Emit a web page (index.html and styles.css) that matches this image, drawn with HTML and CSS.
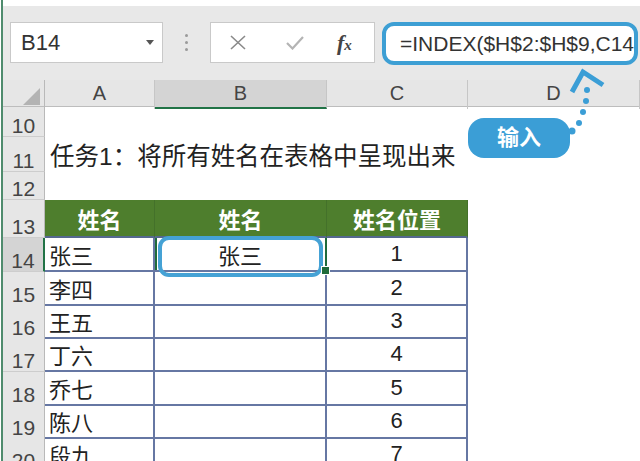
FILE: index.html
```html
<!DOCTYPE html>
<html lang="zh-CN">
<head>
    <meta charset="UTF-8">
    <title>INDEX 姓名</title>
    <link rel="stylesheet" href="styles.css">
</head>
<body>
    <div class="app">
        <div class="toolbar">
            <div class="namebox"><span>B14</span><span class="caret"></span></div>
            <div class="grip"><i></i><i></i><i></i></div>
            <div class="fxbox">
                <svg class="cancel" width="16" height="15" viewBox="0 0 16 15"><path d="M1 1 L15 14 M15 1 L1 14" stroke="#8a8a8a" stroke-width="1.6" fill="none"/></svg>
                <svg class="enter" width="18" height="15" viewBox="0 0 18 15"><path d="M1 8 L6.5 13.5 L17 2" stroke="#b4b4b4" stroke-width="2.2" fill="none"/></svg>
                <span class="fx">f<small>x</small></span>
            </div>
            <div class="formula">=INDEX($H$2:$H$9,C14</div>
        </div>

        <div class="sheet">
            <div class="row heads">
                <div class="corner"></div>
                <div class="ch">A</div>
                <div class="ch sel">B</div>
                <div class="ch">C</div>
                <div class="ch">D</div>
            </div>
            <div class="row r10">
                <div class="rh">10</div><div></div><div></div><div></div><div></div>
            </div>
            <div class="row r11">
                <div class="rh">11</div>
                <div class="title">任务1：将所有姓名在表格中呈现出来</div><div></div><div></div><div></div>
            </div>
            <div class="row r12">
                <div class="rh">12</div><div></div><div></div><div></div><div></div>
            </div>
            <div class="row r13">
                <div class="rh">13</div>
                <div class="th">姓名</div>
                <div class="th">姓名</div>
                <div class="th">姓名位置</div>
                <div></div>
            </div>
            <div class="row r14">
                <div class="rh sel">14</div>
                <div class="t name">张三</div>
                <div class="t mid active">张三</div>
                <div class="t mid">1</div>
                <div></div>
            </div>
            <div class="row">
                <div class="rh">15</div>
                <div class="t name">李四</div><div class="t"></div><div class="t mid">2</div><div></div>
            </div>
            <div class="row">
                <div class="rh">16</div>
                <div class="t name">王五</div><div class="t"></div><div class="t mid">3</div><div></div>
            </div>
            <div class="row r17">
                <div class="rh">17</div>
                <div class="t name">丁六</div><div class="t"></div><div class="t mid">4</div><div></div>
            </div>
            <div class="row">
                <div class="rh">18</div>
                <div class="t name">乔七</div><div class="t"></div><div class="t mid">5</div><div></div>
            </div>
            <div class="row">
                <div class="rh">19</div>
                <div class="t name">陈八</div><div class="t"></div><div class="t mid">6</div><div></div>
            </div>
            <div class="row">
                <div class="rh">20</div>
                <div class="t name">段九</div><div class="t"></div><div class="t mid">7</div><div></div>
            </div>
        </div>

        <div class="callout">输入</div>
        <svg class="pointer" width="50" height="75" viewBox="0 0 50 75">
            <polyline points="12,27 23,7 43,20" stroke="#3b9ed6" stroke-width="5" fill="none"/>
            <g fill="#3b9ed6">
                <circle cx="27" cy="25" r="3"/>
                <circle cx="26" cy="36" r="3"/>
                <circle cx="23" cy="47" r="3"/>
                <circle cx="19" cy="58" r="3"/>
                <circle cx="12" cy="66" r="3.5"/>
            </g>
        </svg>
    </div>
</body>
</html>
```

FILE: styles.css
```css
* {
    box-sizing: border-box;
}
body {
    margin: 0;
    height: 461px;
    overflow: hidden;
    background: #fff;
    font-family: "Liberation Sans", "Noto Sans CJK SC", sans-serif;
    color: #222;
}
.app {
    position: relative;
    margin-left: 1px;
    padding-top: 6px;
    border-left: 2px solid #4f8b6d;
    height: 461px;
}

/* formula bar */
.toolbar {
    display: flex;
    align-items: flex-start;
    height: 74px;
    padding: 16px 2px 0 7px;
    background: #e8e8e8;
}
.namebox {
    display: flex;
    align-items: center;
    justify-content: space-between;
    width: 153px;
    height: 41px;
    padding: 0 8px 0 10px;
    background: #fff;
    border: 1px solid #c9c9c9;
    font-size: 22px;
    color: #333;
}
.caret {
    border-left: 4px solid transparent;
    border-right: 4px solid transparent;
    border-top: 5px solid #555;
}
.grip {
    display: flex;
    flex-direction: column;
    align-items: center;
    justify-content: center;
    gap: 4px;
    width: 47px;
    height: 41px;
}
.grip i {
    width: 3px;
    height: 3px;
    border-radius: 50%;
    background: #9a9a9a;
}
.fxbox {
    display: flex;
    align-items: center;
    width: 165px;
    height: 41px;
    padding-left: 19px;
    background: #fff;
    border: 1px solid #c9c9c9;
}
.cancel {
    margin-right: 40px;
}
.enter {
    margin-right: 33px;
}
.fx {
    font-family: "Liberation Serif", serif;
    font-style: italic;
    font-weight: bold;
    font-size: 22px;
    color: #444;
}
.fx small {
    font-size: 15px;
}
.formula {
    flex: 1;
    height: 43px;
    margin-left: 7px;
    padding-left: 14px;
    background: #fff;
    border: 4px solid #3d9fd4;
    border-radius: 12px;
    font-size: 21px;
    line-height: 35px;
    color: #333;
    white-space: nowrap;
    overflow: hidden;
}

/* sheet grid */
.row {
    display: grid;
    grid-template-columns: 42px 110px 172px 141px 1fr;
    height: 33px;
}
.heads {
    height: 27px;
    background: #e6e6e6;
    border-bottom: 1px solid #bdbdbd;
}
.corner {
    position: relative;
    border-right: 1px solid #b9b9b9;
}
.corner::after {
    content: "";
    position: absolute;
    right: 4px;
    bottom: 4px;
    border-left: 17px solid transparent;
    border-bottom: 17px solid #b3b3b3;
}
.ch {
    border-right: 1px solid #c6c6c6;
    text-align: center;
    font-size: 20px;
    line-height: 27px;
    color: #444;
}
.ch.sel {
    background: #d4d4d4;
    border-bottom: 2px solid #217346;
}
.r10 { height: 30px; }
.r11 { height: 35px; }
.r12 { height: 28px; }
.r13 { height: 38px; }
.r14 { height: 34px; }
.r17 { height: 34px; }

.rh {
    display: flex;
    align-items: flex-end;
    justify-content: center;
    background: #e6e6e6;
    border-right: 1px solid #b9b9b9;
    border-bottom: 1px solid #cdcdcd;
    font-size: 21px;
    line-height: 1;
    color: #444;
}
.rh.sel {
    background: #d4d4d4;
    border-right: 2px solid #217346;
}
.title {
    display: flex;
    align-items: center;
    padding-left: 5px;
    font-size: 24.5px;
    white-space: nowrap;
    color: #222;
}
.th {
    display: flex;
    align-items: center;
    justify-content: center;
    background: #4e7e2d;
    border-right: 1px solid #44712a;
    border-bottom: 2px solid #55688f;
    color: #fff;
    font-weight: bold;
    font-size: 22px;
}
.t {
    display: flex;
    align-items: center;
    border-right: 2px solid #6677a3;
    border-bottom: 2px solid #6677a3;
    font-size: 22px;
    color: #222;
}
.name {
    padding-left: 4px;
}
.mid {
    justify-content: center;
}
.active {
    position: relative;
    border-right-color: #1f6b3b;
    box-shadow: inset 2px 0 0 #1f6b3b;
}
.active::before {
    content: "";
    position: absolute;
    left: 3px;
    top: -2px;
    right: 2px;
    bottom: -7px;
    border: 4px solid #45a2d5;
    border-radius: 11px;
}
.active::after {
    content: "";
    position: absolute;
    right: -5px;
    bottom: -5px;
    width: 7px;
    height: 7px;
    background: #1f6b3b;
    border: 1px solid #fff;
}

/* annotation */
.callout {
    position: absolute;
    left: 465px;
    top: 118px;
    width: 102px;
    height: 40px;
    border-radius: 16px;
    background: #3b9ed6;
    color: #fff;
    font-weight: bold;
    font-size: 22px;
    line-height: 40px;
    text-align: center;
}
.pointer {
    position: absolute;
    left: 557px;
    top: 65px;
}
```
